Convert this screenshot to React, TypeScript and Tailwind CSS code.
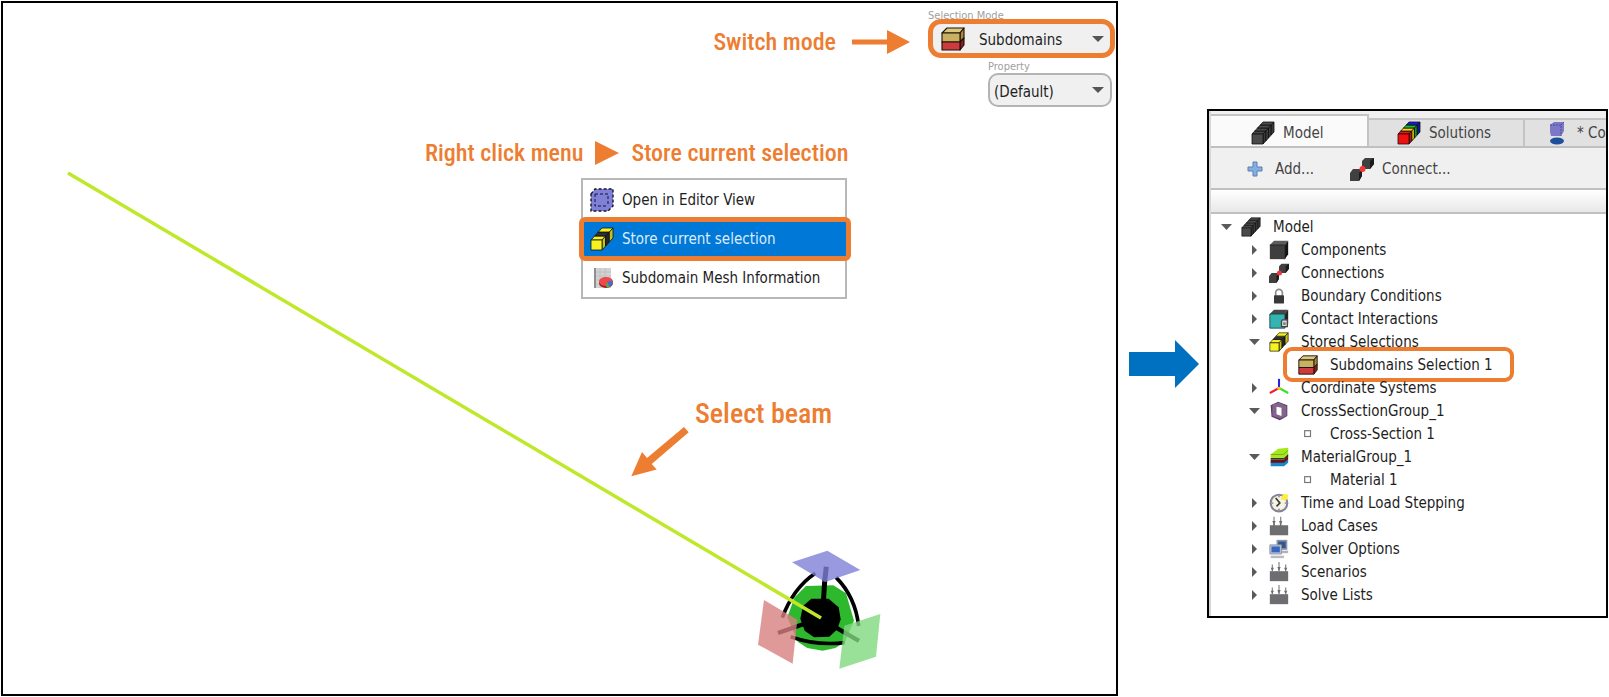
import type { ReactNode } from 'react';
import clsx from 'clsx';

// ===================================
// ICONS
// ===================================

type IconProps = { className?: string };

// Bar of joined cubes running from the lower left (first colour) to the upper right
function CubeRow({ colors, className }: IconProps & { colors: string[] }) {
  const dx = 11 / colors.length;
  const dy = 12 / colors.length;
  return (
    <svg viewBox="0 0 24 24" className={className} aria-hidden="true">
      <g stroke="#111" strokeWidth="0.8" strokeLinejoin="round">
        {colors.map((color, i) => {
          const x = 1 + i * dx;
          const y = 13 - i * dy;
          return (
            <g key={i} fill={color}>
              <path d={`M${x} ${y}l${dx} ${-dy}h11l${-dx} ${dy}z`} />
              <path d={`M${x + 11} ${y}l${dx} ${-dy}v10l${-dx} ${dy}z`} />
            </g>
          );
        })}
        <path d="M1 13h11v10H1z" fill={colors[0]} />
      </g>
      <path d="M12 13L23 1v10L12 23z" fill="#000" fillOpacity=".2" />
    </svg>
  );
}

function SubdomainsIcon({ className }: IconProps) {
  return (
    <svg viewBox="0 0 24 24" className={className} aria-hidden="true">
      <g stroke="#1c1208" strokeWidth="1.1" strokeLinejoin="round">
        <path d="M1 6l5-5h17l-4 5z" fill="#dcc77c" />
        <path d="M19 6l4-5v10l-4 4z" fill="#a8893e" />
        <path d="M19 15l4-4v7l-4 5z" fill="#8e1b20" />
        <path d="M1 6h18v9H1z" fill="#c9b162" />
        <path d="M1 15h18v8H1z" fill="#cf3a3f" />
      </g>
    </svg>
  );
}

function EditorViewIcon({ className }: IconProps) {
  return (
    <svg viewBox="0 0 24 24" className={className} aria-hidden="true">
      <path d="M1 6l4-5h18v17l-5 5H1z" fill="#8080d8" />
      <g fill="none" stroke="#15152e" strokeWidth="1.4" strokeDasharray="3 2">
        <path d="M1 6l4-5h18v17l-5 5H1z" />
        <path d="M5 6h13v12M5 6v12h13" strokeWidth="1" />
      </g>
    </svg>
  );
}

function MeshInfoIcon({ className }: IconProps) {
  return (
    <svg viewBox="0 0 24 24" className={className} aria-hidden="true">
      <path d="M4 2h17v20H4z" fill="#d2d2d2" />
      <path d="M4 2h2v20H4z" fill="#8f8f8f" />
      <path d="M6 6h15M6 10h15M6 14h15M6 18h15M10 2v20M15 2v20" stroke="#bdbdbd" strokeWidth="0.8" />
      <ellipse cx="16" cy="17" rx="7" ry="5" fill="#a01c1c" />
      <ellipse cx="16" cy="15.500" rx="7" ry="4.500" fill="#ee4848" />
      <path d="M17 16l5-1.500q1.500 3-1 5.500l-4-1z" fill="#3f6fd0" />
      <path d="M17 16l3 5q-3 1.200-4-.5z" fill="#4cae58" />
    </svg>
  );
}

function CubeIcon({ className }: IconProps) {
  return (
    <svg viewBox="0 0 24 24" className={className} aria-hidden="true">
      <path d="M1 6l5-5h17l-4 5z" fill="#5c5c5c" />
      <path d="M19 6l4-5v16l-4 6z" fill="#151515" />
      <path d="M1 6h18v17H1z" fill="#3e3e3e" />
      <path d="M1 6h18v17" fill="none" stroke="#1f1f1f" />
    </svg>
  );
}

function ConnectIcon({ className }: IconProps) {
  return (
    <svg viewBox="0 0 24 24" className={className} aria-hidden="true">
      <path d="M12 4l3-3h9v6l-4 5h-8z" fill="#404040" />
      <path d="M20 4l4-3v6l-4 5z" fill="#1b1b1b" />
      <path d="M0 16l3-4h9v7l-3 5H0z" fill="#404040" />
      <path d="M9 16l3-4v7l-3 5z" fill="#1b1b1b" />
      <circle cx="12.500" cy="12" r="3" fill="#f03838" />
    </svg>
  );
}

function LockIcon({ className }: IconProps) {
  return (
    <svg viewBox="0 0 24 24" className={className} aria-hidden="true">
      <path d="M8 12V8a4 4 0 0 1 8 0v4" fill="none" stroke="#8d8d8d" strokeWidth="2" />
      <rect x="6" y="11" width="12" height="10" rx="1" fill="#383838" />
    </svg>
  );
}

function ContactIcon({ className }: IconProps) {
  return (
    <svg viewBox="0 0 24 24" className={className} aria-hidden="true">
      <path d="M1 6l5-5h17l-4 5z" fill="#484848" />
      <path d="M19 6l4-5v16l-4 6z" fill="#222" />
      <path d="M1 6h18v17H1z" fill="#34b3b3" stroke="#173f3f" />
      <path d="M16 13h6v8h-7v-6z" fill="#ddd" stroke="#444" strokeWidth="1.500" />
      <path d="M17 16h3v3h-3z" fill="#777" />
    </svg>
  );
}

function AxesIcon({ className }: IconProps) {
  return (
    <svg viewBox="0 0 24 24" className={className} aria-hidden="true">
      <g fill="none" strokeWidth="2.500">
        <path d="M12 12L1 18" stroke="#f01c2c" />
        <path d="M12 12l11 6" stroke="#2fe32f" />
        <path d="M12 12V1" stroke="#2424e8" />
      </g>
      <circle cx="12" cy="12.500" r="2" fill="#ffc400" />
    </svg>
  );
}

function CrossSectionIcon({ className }: IconProps) {
  return (
    <svg viewBox="0 0 24 24" className={className} aria-hidden="true">
      <path d="M2 5l9-4 11 4v13l-9 5-10-4z" fill="#5a3d62" />
      <path d="M4 4l8-2 9 4v12l-8 3-9-3z" fill="#83648c" />
      <path d="M9 7l6 1v10l-6-2z" fill="#fff" />
    </svg>
  );
}

function MaterialIcon({ className }: IconProps) {
  return (
    <svg viewBox="0 0 24 24" className={className} aria-hidden="true">
      <path d="M2 18h16l5-3v4l-5 4H2z" fill="#1687c8" />
      <path d="M2 15h16l5-5v5l-5 4H2z" fill="#6a1018" />
      <path d="M2 13h16l5-5v3l-5 4H2z" fill="#303818" />
      <path d="M2 9L11 2l12-1v7l-5 5H2z" fill="#a4e81c" />
      <path d="M2 9h15l6-5" fill="none" stroke="#6fa812" />
    </svg>
  );
}

function ClockIcon({ className }: IconProps) {
  return (
    <svg viewBox="0 0 24 24" className={className} aria-hidden="true">
      <circle cx="12" cy="12" r="10" fill="#f6f3e2" stroke="#85859a" strokeWidth="2.500" />
      <path d="M14 8l3-7 6 1-1 6z" fill="#ffee38" />
      <path d="M8 6l5 6-4 4" fill="none" stroke="#3a3a3a" strokeWidth="2" />
      <path d="M12 4v1M12 19v1M4 12h1M19 12h1" stroke="#444" strokeWidth="1.500" />
    </svg>
  );
}

function LoadCaseIcon({ className }: IconProps) {
  return (
    <svg viewBox="0 0 24 24" className={className} aria-hidden="true">
      <path d="M1 11h4V9h2v2h6V9h2v2h8v12H1z" fill="#6e6e72" />
      <path d="M6 1v8M14 1v8" stroke="#8c8c8c" strokeWidth="1.500" />
      <path d="M4 6h4l-2 5zM12 6h4l-2 5z" fill="#6e6e72" />
    </svg>
  );
}

function ScenarioIcon({ className }: IconProps) {
  return (
    <svg viewBox="0 0 24 24" className={className} aria-hidden="true">
      <path d="M1 11h22v12H1z" fill="#6e6e72" />
      <path d="M4 3v8M12 0v11M20 3v8" stroke="#8c8c8c" strokeWidth="1.500" />
      <path d="M2 7h4l-2 4zM10 6h4l-2 5zM18 7h4l-2 4z" fill="#6e6e72" />
    </svg>
  );
}

function SolverIcon({ className }: IconProps) {
  return (
    <svg viewBox="0 0 24 24" className={className} aria-hidden="true">
      <path d="M9 1h13v12H9z" fill="#8d96a8" />
      <path d="M11 3h9v8h-9z" fill="#35558f" />
      <path d="M14 14h9v3h-9z" fill="#aeb2ba" />
      <path d="M1 7h14v11H1z" fill="#b9bfcb" stroke="#8c94a4" />
      <path d="M3 9h10v7H3z" fill="#3468c4" />
      <path d="M2 20h16v3H2z" fill="#b9bcc2" />
    </svg>
  );
}

function ItemIcon({ className }: IconProps) {
  return (
    <svg viewBox="0 0 24 24" className={className} aria-hidden="true">
      <rect x="8" y="8" width="7" height="7" fill="#fff" stroke="#777" strokeWidth="1.400" />
    </svg>
  );
}

function ContentIcon({ className }: IconProps) {
  return (
    <svg viewBox="0 0 24 24" className={className} aria-hidden="true">
      <path d="M5 4l4-3h10v9l-3 5H6l-1-4z" fill="#7c78c8" />
      <path d="M5 4h11v11M16 4l3-3" fill="none" stroke="#4e4a96" strokeDasharray="2 1" />
      <ellipse cx="12" cy="20" rx="7" ry="3.500" fill="#1c4f9c" />
    </svg>
  );
}

function PlusIcon({ className }: IconProps) {
  return (
    <svg viewBox="0 0 16 16" className={className} aria-hidden="true">
      <path d="M6 1h4v5h5v4h-5v5H6v-5H1V6h5z" fill="#86aee0" stroke="#5680b4" />
    </svg>
  );
}

const DARK = ['#4a4a4a', '#4a4a4a', '#4a4a4a', '#4a4a4a'];
const STORED = ['#f6f220', '#303030', '#f6f220'];
const RAINBOW = ['#f01010', '#f8d810', '#18c020', '#1818e0'];

function ModelIcon({ className }: IconProps) {
  return <CubeRow colors={DARK} className={className} />;
}

function StoredIcon({ className }: IconProps) {
  return <CubeRow colors={STORED} className={className} />;
}

// ===================================
// MODEL TREE
// ===================================

type Node = {
  label: string;
  level: 0 | 1 | 2;
  icon: (props: IconProps) => ReactNode;
  state?: 'open' | 'closed';
  marked?: boolean;
};

const nodes: Node[] = [
  { label: 'Model', level: 0, icon: ModelIcon, state: 'open' },
  { label: 'Components', level: 1, icon: CubeIcon, state: 'closed' },
  { label: 'Connections', level: 1, icon: ConnectIcon, state: 'closed' },
  { label: 'Boundary Conditions', level: 1, icon: LockIcon, state: 'closed' },
  { label: 'Contact Interactions', level: 1, icon: ContactIcon, state: 'closed' },
  { label: 'Stored Selections', level: 1, icon: StoredIcon, state: 'open' },
  { label: 'Subdomains Selection 1', level: 2, icon: SubdomainsIcon, marked: true },
  { label: 'Coordinate Systems', level: 1, icon: AxesIcon, state: 'closed' },
  { label: 'CrossSectionGroup_1', level: 1, icon: CrossSectionIcon, state: 'open' },
  { label: 'Cross-Section 1', level: 2, icon: ItemIcon },
  { label: 'MaterialGroup_1', level: 1, icon: MaterialIcon, state: 'open' },
  { label: 'Material 1', level: 2, icon: ItemIcon },
  { label: 'Time and Load Stepping', level: 1, icon: ClockIcon, state: 'closed' },
  { label: 'Load Cases', level: 1, icon: LoadCaseIcon, state: 'closed' },
  { label: 'Solver Options', level: 1, icon: SolverIcon, state: 'closed' },
  { label: 'Scenarios', level: 1, icon: ScenarioIcon, state: 'closed' },
  { label: 'Solve Lists', level: 1, icon: ScenarioIcon, state: 'closed' },
];

const indent = { 0: 'pl-[10px]', 1: 'pl-[38px]', 2: 'pl-[67px]' };

function Caret({ open }: { open: boolean }) {
  return (
    <svg viewBox="0 0 12 12" className="size-3" aria-hidden="true">
      <path d={open ? 'M0 3h11L5.500 9z' : 'M3 1v10l5-5z'} fill="#5a5a5a" />
    </svg>
  );
}

function TreeRow({ node }: { node: Node }) {
  const Icon = node.icon;
  return (
    <li className={clsx('relative flex h-[23px] items-center', indent[node.level])}>
      {node.marked && (
        <span className="absolute -inset-y-[6px] left-[72px] w-[231px] rounded-[9px] border-4 border-[#ed7d31]" />
      )}
      {node.state ? (
        <button type="button" className="shrink-0" aria-label={`Toggle ${node.label}`}>
          <Caret open={node.state === 'open'} />
        </button>
      ) : (
        <span className="w-3 shrink-0" />
      )}
      <Icon className="ml-2 size-5 shrink-0" />
      <span className="ml-3 whitespace-nowrap">{node.label}</span>
    </li>
  );
}

function Tab({ icon, label, active, className }: { icon: ReactNode; label: string; active?: boolean; className?: string }) {
  return (
    <button
      type="button"
      role="tab"
      aria-selected={!!active}
      className={clsx(
        'flex shrink-0 items-center gap-2 border-t-2 border-r-2 border-[#c4c4c4] whitespace-nowrap',
        active ? 'h-8 bg-[#fafafa] pt-1' : 'h-7 bg-[#e1e1e1]',
        className,
      )}
    >
      {icon}
      {label}
    </button>
  );
}

function ModelPanel() {
  return (
    <aside className="w-[401px] overflow-hidden border-2 border-black bg-white">
      <div className="border-l-2 border-[#d6d6d6]">
        <div role="tablist" className="flex items-end overflow-hidden border-b-2 border-[#c0c0c0] bg-[#f0f0f0] pt-[3px] text-[#444]">
          <Tab active label="Model" icon={<ModelIcon className="size-6" />} className="w-[158px] pl-10" />
          <Tab label="Solutions" icon={<CubeRow colors={RAINBOW} className="size-6" />} className="w-[156px] pl-7" />
          <Tab label="* Co" icon={<ContentIcon className="size-6" />} className="w-[120px] pl-5" />
        </div>

        <div className="flex h-10 items-center bg-[#f0f0f0] pt-[2px] pl-9 text-[#444]">
          <button type="button" className="flex items-center gap-3">
            <PlusIcon className="size-4" />
            Add...
          </button>
          <button type="button" className="ml-9 flex items-center gap-2">
            <ConnectIcon className="size-6" />
            Connect...
          </button>
        </div>

        <div className="h-[26px] border-y-2 border-[#c0c0c0] bg-linear-to-b from-white to-[#e8e8e8]" />

        <ul className="pt-px pb-[10px]">
          {nodes.map((node) => (
            <TreeRow key={node.label} node={node} />
          ))}
        </ul>
      </div>
    </aside>
  );
}

// ===================================
// 3D VIEW
// ===================================

// condensed type of the orange annotations
const note = "font-['Roboto_Condensed','Liberation_Sans_Narrow','Liberation_Sans',sans-serif] font-medium leading-8 text-[#ed7d31] whitespace-nowrap";

function Scene() {
  return (
    <svg viewBox="3 3 900 690" className="absolute top-0 left-0 h-[690px] w-[900px]" aria-hidden="true">
      {/* support symbol */}
      <g transform="translate(600 380) scale(.33333)">
        <path d="M618 618L700 616 738 640 762 722 735 786 706 804 668 812 622 804 594 786 562 712 584 652z" fill="#2eb82e" />
        <g fill="none" stroke="#000" strokeWidth="11">
          <path d="M547 713Q580 624 646 580" />
          <path d="M708 592Q766 650 776 738" />
          <path d="M572 770Q650 798 734 788" />
          <path d="M668 700L674 604M674 604L679 560" strokeWidth="15" />
          <path d="M660 715L534 759M660 715L777 783" strokeWidth="13" />
        </g>
        <path d="M634 656h52l30 26 6 36-10 30-24 22-46 2-28-20-13-36 8-38z" fill="#000" />
        <path d="M576 547L682 512 781 570 676 606z" fill="#8080d8" fillOpacity=".8" />
        <path d="M492 660L592 719 578 851 474 794z" fill="#d88080" fillOpacity=".8" />
        <path d="M733 737L841 702 828 830 718 866z" fill="#80d880" fillOpacity=".8" />
      </g>

      {/* beam */}
      <path d="M68 173L821 618" stroke="#bfe82a" strokeWidth="3.500" />

      {/* pointer to the beam */}
      <path d="M684 427l4.700 5.300-37 31.700 5 5.600-25.400 6.600 10.700-24.300 5 6z" fill="#ed7d31" />
    </svg>
  );
}

function SelectCaret() {
  return (
    <svg viewBox="0 0 12 6" className="pointer-events-none absolute right-[6px] h-[6px] w-3" aria-hidden="true">
      <path d="M0 0h12L6 6z" fill="#555" />
    </svg>
  );
}

function ViewControls() {
  return (
    <div className="relative flex items-start justify-end pt-[7px] pr-px">
      <div className="mt-4 mr-[18px] flex items-center gap-4">
        <span className={clsx(note, 'text-2xl leading-8')}>Switch mode</span>
        <svg viewBox="0 0 58 24" className="h-6 w-[58px]" aria-hidden="true">
          <path d="M0 9.500h35V0l23 12-23 12v-9.500H0z" fill="#ed7d31" />
        </svg>
      </div>

      <div className="flex w-[187px] flex-col items-end">
        <label htmlFor="mode" className="h-[9px] w-full text-[11px] leading-[11px] text-[#a0a0a0]">
          Selection Mode
        </label>
        <div className="relative flex w-full items-center rounded-[13px] border-5 border-[#ed7d31] bg-[#f0f0f0]">
          <SubdomainsIcon className="pointer-events-none absolute left-2 size-6" />
          <select id="mode" className="h-[29px] w-full appearance-none pt-[3px] pl-[46px]">
            <option>Subdomains</option>
          </select>
          <SelectCaret />
        </div>
        <label htmlFor="property" className="mt-[3px] mb-px w-[127px] text-[11px] leading-[11px] text-[#a0a0a0]">
          Property
        </label>
        <div className="relative mr-[3px] flex w-[124px] items-center rounded-[10px] border-2 border-[#b4b4b4] bg-[#f0f0f0]">
          <select id="property" className="h-[30px] w-full appearance-none pt-[3px] pl-1">
            <option>(Default)</option>
          </select>
          <SelectCaret />
        </div>
      </div>
    </div>
  );
}

function MenuItem({ icon, label, active }: { icon: ReactNode; label: string; active?: boolean }) {
  return (
    <button
      type="button"
      role="menuitem"
      className={clsx(
        'flex items-center gap-2 text-left whitespace-nowrap',
        active
          ? '-my-[2px] -mr-[6px] -ml-1 h-11 rounded-md border-5 border-[#ed7d31] bg-[#0078d7] pl-[6px] text-[#dcecfa]'
          : 'h-[38px] pl-[7px]',
      )}
    >
      {icon}
      {label}
    </button>
  );
}

function ModelView() {
  return (
    <section className="relative flex-1 border-2 border-black bg-white">
      <Scene />
      <ViewControls />

      <div className={clsx(note, 'absolute top-[134px] left-[422px] flex items-center gap-3 text-2xl')}>
        <span>Right click menu</span>
        <svg viewBox="0 0 24 24" className="size-6" aria-hidden="true">
          <path d="M0 0l24 12L0 24z" fill="#ed7d31" />
        </svg>
        <span>Store current selection</span>
      </div>

      <div role="menu" className="absolute top-[175px] left-[578px] flex w-[266px] flex-col border-2 border-[#b8b8b8] bg-white pt-px">
        <MenuItem icon={<EditorViewIcon className="size-6" />} label="Open in Editor View" />
        <MenuItem active icon={<StoredIcon className="size-6" />} label="Store current selection" />
        <MenuItem icon={<MeshInfoIcon className="size-6" />} label="Subdomain Mesh Information" />
      </div>

      <span className={clsx(note, 'absolute top-[395px] left-[692px] text-[28px]')}>Select beam</span>
    </section>
  );
}

export default function App() {
  return (
    <main className="flex min-h-screen bg-white p-px font-['DejaVu_Sans_Condensed','Noto_Sans',sans-serif] text-[15px] leading-5 text-[#1e1e1e]">
      <ModelView />
      <div className="flex shrink-0 items-center self-start pt-[108px]">
        <svg viewBox="0 0 70 48" className="mr-2 ml-[11px] h-12 w-[70px]" aria-hidden="true">
          <path d="M0 12h46V0l24 24-24 24V36H0z" fill="#0070c0" />
        </svg>
        <ModelPanel />
      </div>
    </main>
  );
}
